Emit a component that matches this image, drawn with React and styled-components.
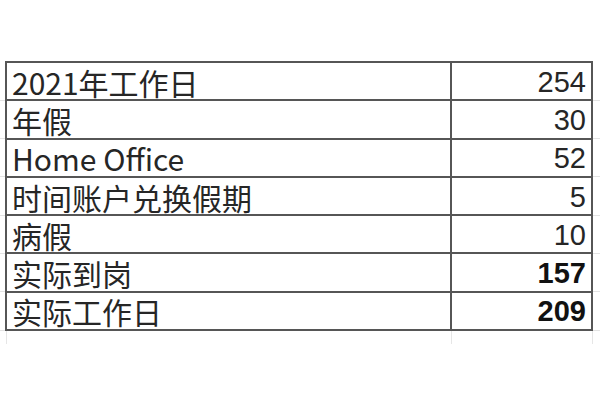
import React from "react"
import styled, { createGlobalStyle } from "styled-components"

const GlobalStyle = createGlobalStyle`
  html, body {
    margin: 0;
    padding: 0;
    background: #ffffff;
  }
  body {
    font-family: "Noto Sans CJK SC", "Liberation Sans", sans-serif;
    color: #222;
  }
`

const Sheet = styled.div`
  width: 600px;
  height: 400px;
  padding-top: 61px;
  box-sizing: border-box;
  overflow: hidden;
`

const Grid = styled.table`
  width: 600px;
  border-collapse: collapse;
  table-layout: fixed;
`

const Row = styled.tr`
  height: 38.3px;
`

// light spreadsheet gridline bits sticking out beside the framed block
const Stub = styled.td`
  padding: 0;
  border-bottom: 1px solid #e3e3e3;
`

const Cell = styled.td`
  border: 2px solid #565656;
  padding: 1px 5px 0;
  line-height: 34px;
  white-space: nowrap;
  text-align: ${(p) => (p.$num ? "right" : "left")};
  font-weight: ${(p) => (p.$bold ? 700 : 400)};
  color: ${(p) => (p.$bold ? "#111" : "#262626")};
  font-family: ${(p) =>
    p.$num ? '"Liberation Sans", "Noto Sans CJK SC", sans-serif' : "inherit"};
  font-size: ${(p) => (p.$num ? "29px" : "30px")};
`

const TailRow = styled.tr`
  height: 14px;
`

const Tail = styled.td`
  padding: 0;
  border-right: 1px solid ${(p) => (p.$line ? "#e6e6e6" : "transparent")};
`

const rows = [
  { label: "2021年工作日", value: "254" },
  { label: "年假", value: "30" },
  { label: "Home Office", value: "52" },
  { label: "时间账户兑换假期", value: "5" },
  { label: "病假", value: "10" },
  { label: "实际到岗", value: "157", bold: true },
  { label: "实际工作日", value: "209", bold: true },
]

export default function App() {
  return (
    <>
      <GlobalStyle />
      <Sheet>
        <Grid>
          <colgroup>
            <col style={{ width: "6px" }} />
            <col style={{ width: "445px" }} />
            <col style={{ width: "141px" }} />
            <col />
          </colgroup>
          <tbody>
            {rows.map((r) => (
              <Row key={r.label}>
                <Stub />
                <Cell>{r.label}</Cell>
                <Cell $num $bold={r.bold}>
                  {r.value}
                </Cell>
                <Stub />
              </Row>
            ))}
            <TailRow>
              <Tail $line />
              <Tail $line />
              <Tail $line />
              <Tail />
            </TailRow>
          </tbody>
        </Grid>
      </Sheet>
    </>
  )
}
